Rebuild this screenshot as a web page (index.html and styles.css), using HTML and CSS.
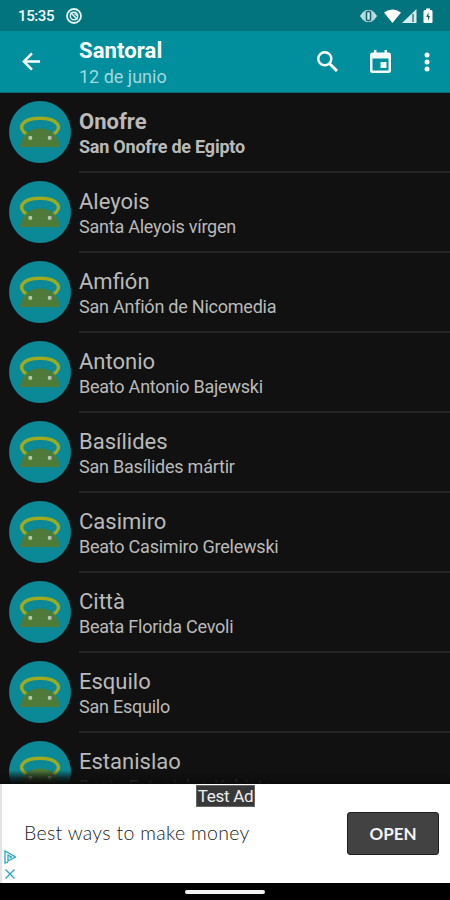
FILE: index.html
```html
<!DOCTYPE html>
<html lang="es">
<head>
<meta charset="utf-8">
<title>Santoral</title>
<link rel="stylesheet" href="styles.css">
</head>
<body>
<svg class="defs" aria-hidden="true">
  <symbol id="droid" viewBox="0 0 62 62">
    <circle cx="31" cy="31" r="31" fill="#0b8996"/>
    <path d="M17.500 33C7.500 27 13 17.300 31 17.300S54.500 27 44.500 33" fill="none" stroke="#9eab20" stroke-width="3.400"/>
    <path d="M11 46c1-6 3-11 7-14 3-3 7-4.500 13-4.500s10 1.500 13 4.500c4 3 6 8 7 14z" fill="#4e7b38"/>
    <rect x="19.500" y="35" width="3.700" height="3.700" rx="1" fill="#b9c2b2"/>
    <rect x="38.800" y="35" width="3.700" height="3.700" rx="1" fill="#b9c2b2"/>
  </symbol>
</svg>
<div class="screen">
  <div class="status">
    <span class="clock">15:35</span>
    <svg class="dnd" viewBox="0 0 16 16" fill="none" stroke="#e4f3f4"><circle cx="8" cy="8" r="7" stroke-width="1.800"/><circle cx="8" cy="8" r="3.700" stroke-width="1.500"/><path d="M4.500 4.500l7 7M8.500 5.500l2.500 2" stroke-width="1.500"/></svg>
    <svg class="signals" viewBox="0 0 74 16" fill="#fff">
      <path d="M0 8l3-4v8zM17 8l-3-4v8z" fill="#c4dfe2"/><path d="M3 4l3-2h5l3 2v8l-3 2H6l-3-2z" fill="#b5d6da"/><rect x="6.500" y="3.500" width="4" height="9" rx="1" fill="#d5e9eb" stroke="#12646f" stroke-width="1.500"/>
      <path d="M24 4.500Q32.500-1.500 41 4.500L32.500 15z"/>
      <path d="M42 15L56.500 1v14z" fill="#d9eced"/><path d="M53 6v8" stroke="#397e88" stroke-width="1.500"/>
      <path d="M63.500 3.500q0-1.500 1.500-1.500h1V.5h4V2h1q1.500 0 1.500 1.500V14q0 1-1 1h-7q-1 0-1-1z"/><path d="M68.500 4l-2.300 5H68v4l2-5h-1.500z" fill="#11646e"/>
    </svg>
  </div>
  <header class="bar">
    <svg class="back" viewBox="0 0 20 20" fill="none" stroke="#fff" stroke-width="2.600"><path d="M19 10H2.500M10.500 1.500L2 10l8.500 8.500"/></svg>
    <div class="heading"><h1>Santoral</h1><p>12 de junio</p></div>
    <svg class="search" viewBox="0 0 21 21" fill="none" stroke="#fff"><circle cx="7.800" cy="7.800" r="6.500" stroke-width="2.400"/><path d="M12.500 12.500l7.500 7.500" stroke-width="2.900"/></svg>
    <svg class="calendar" viewBox="0 0 21 23"><path d="M4 0h2.500v2.500h8V0H17v2.500h1.500Q21 2.500 21 5v15.500Q21 23 18.500 23h-16Q0 23 0 20.500V5q0-2.500 2.500-2.500H4zM2.500 8.500v12h16v-12z" fill="#f5fbfb" fill-rule="evenodd"/><path d="M10.500 12h6v6h-6z" fill="#f5fbfb"/></svg>
    <svg class="more" viewBox="0 0 6 20" fill="#fff"><circle cx="3" cy="3" r="2.500"/><circle cx="3" cy="10" r="2.500"/><circle cx="3" cy="17" r="2.500"/></svg>
  </header>
  <main class="list">
    <article class="row today"><svg class="avatar"><use href="#droid"/></svg><div class="info"><h2>Onofre</h2><p>San Onofre de Egipto</p></div></article>
    <article class="row"><svg class="avatar"><use href="#droid"/></svg><div class="info"><h2>Aleyois</h2><p>Santa Aleyois vírgen</p></div></article>
    <article class="row"><svg class="avatar"><use href="#droid"/></svg><div class="info"><h2>Amfión</h2><p>San Anfión de Nicomedia</p></div></article>
    <article class="row"><svg class="avatar"><use href="#droid"/></svg><div class="info"><h2>Antonio</h2><p>Beato Antonio Bajewski</p></div></article>
    <article class="row"><svg class="avatar"><use href="#droid"/></svg><div class="info"><h2>Basílides</h2><p>San Basílides mártir</p></div></article>
    <article class="row"><svg class="avatar"><use href="#droid"/></svg><div class="info"><h2>Casimiro</h2><p>Beato Casimiro Grelewski</p></div></article>
    <article class="row"><svg class="avatar"><use href="#droid"/></svg><div class="info"><h2>Città</h2><p>Beata Florida Cevoli</p></div></article>
    <article class="row"><svg class="avatar"><use href="#droid"/></svg><div class="info"><h2>Esquilo</h2><p>San Esquilo</p></div></article>
    <article class="row"><svg class="avatar"><use href="#droid"/></svg><div class="info"><h2>Estanislao</h2><p>Beato Estanislao Kubista</p></div></article>
  </main>
  <aside class="ad">
    <span class="tag">Test Ad</span>
    <span class="copy">Best ways to make money</span>
    <span class="open">OPEN</span>
    <svg class="choices" viewBox="0 0 12 30" fill="none" stroke="#28a5c4" stroke-width="1.300"><path d="M4 12L1 13V1l10.500 6L4 11V5l3.500 2L5.500 8.200M1.500 19.500l9 9M10.500 19.500l-9 9"/></svg>
  </aside>
  <footer class="nav"><span class="pill"></span></footer>
</div>
</body>
</html>
```
FILE: styles.css
```css
* { box-sizing: border-box; margin: 0; padding: 0; }
body { background: #000; font-family: Roboto, sans-serif; }
.defs { position: absolute; width: 0; height: 0; }
.screen { width: 450px; height: 900px; display: flex; flex-direction: column; overflow: hidden; }
.status { height: 31px; background: #02747e; display: flex; align-items: center; padding: 1px 16px 0 18px; flex: none; }
.clock { color: #f2fafa; font-size: 15px; font-weight: 500; letter-spacing: -0.4px; width: 48px; }
.dnd { width: 16px; height: 16px; }
.signals { width: 74px; height: 16px; margin-left: auto; }
.bar { height: 62px; background: #018f9d; border-bottom: 1px solid #066e78; display: flex; align-items: center; padding: 0 20px 0 22px; flex: none; }
.back { width: 19px; height: 19px; margin-right: 38px; }
.heading { flex: 1; padding-top: 3px; }
h1 { color: #fff; font-size: 22px; line-height: 27px; font-weight: 700; letter-spacing: 0.1px; }
.heading p { color: #a0d9de; font-size: 18px; line-height: 25px; }
.search { width: 21px; height: 21px; }
.calendar { width: 21px; height: 23px; margin-left: 32px; }
.more { width: 6px; height: 20px; margin-left: 33px; }
.list { height: 691px; background: #111; overflow: hidden; position: relative; flex: none; }
.list::after { content: ""; position: absolute; left: 0; right: 0; bottom: 0; height: 14px; background: linear-gradient(rgba(14,14,14,0), rgba(14,14,14,.8) 60%, #0a0a0a); }
.row { height: 80px; display: flex; padding-left: 9px; }
.avatar { width: 62px; height: 62px; margin: 8px 8px 0 0; flex: none; }
.info { flex: 1; padding-top: 14px; border-bottom: 2px solid #252525; color: #bababa; }
h2 { font-size: 22px; line-height: 29px; font-weight: 400; }
.info p { font-size: 18px; line-height: 22px; letter-spacing: -0.23px; }
.today h2, .today p { font-weight: 700; }
.ad { height: 99px; background: #fff; border-left: 2px solid #e4e4e4; display: flex; align-items: center; justify-content: space-between; padding: 0 11px 0 22px; position: relative; flex: none; }
.tag { position: absolute; left: 194px; top: 1px; width: 59px; height: 22px; background: #383838; border: 1px solid #666; color: #eee; font-size: 17px; line-height: 21px; letter-spacing: -0.3px; text-align: center; white-space: nowrap; }
.copy { font-family: Lato, sans-serif; color: #222; font-size: 19.5px; font-weight: 300; letter-spacing: 0.3px; white-space: nowrap; padding-bottom: 3px; }
.open { width: 92px; height: 43px; background: #424242; border: 1px solid #202020; border-radius: 3px; color: #f3f3f3; font: 700 17px/41px Lato, sans-serif; text-align: center; }
.choices { position: absolute; left: 2px; top: 66px; width: 12px; height: 30px; }
.nav { flex: 1; background: #000; display: flex; justify-content: center; padding-top: 7px; }
.pill { width: 80px; height: 4px; border-radius: 2px; background: #f2f2f2; }
```
